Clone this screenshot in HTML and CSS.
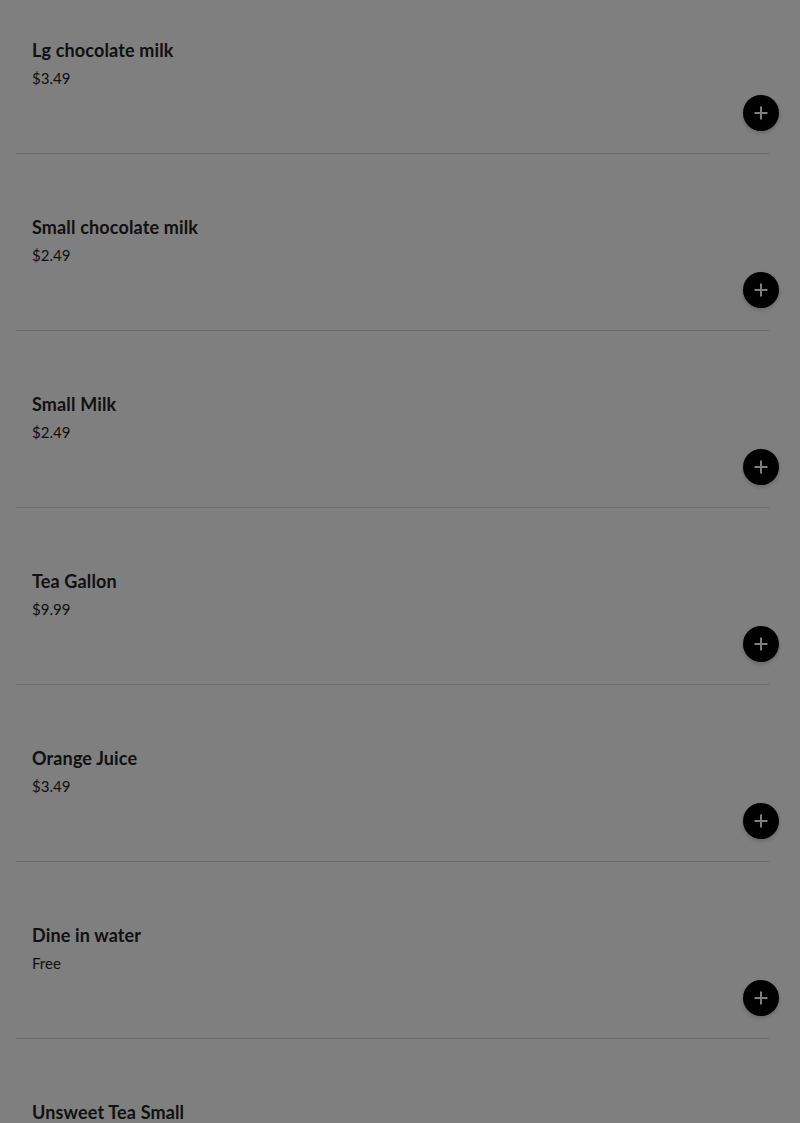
FILE: index.html
```html
<!DOCTYPE html>
<html lang="en">
<head>
    <meta charset="UTF-8">
    <meta name="viewport" content="width=device-width, initial-scale=1.0">
    <title>Menu - Drinks</title>
    <link rel="stylesheet" href="styles.css">
</head>
<body>

    <ul class="menu-list">
        <li class="menu-item">
            <div class="item-name">Lg chocolate milk</div>
            <div class="item-price">$3.49</div>
            <div class="item-actions"><button class="add-btn" aria-label="Add"><svg viewBox="0 0 16 16"><path d="M8 1.5v13M1.5 8h13"/></svg></button></div>
        </li>
        <li class="menu-item">
            <div class="item-name">Small chocolate milk</div>
            <div class="item-price">$2.49</div>
            <div class="item-actions"><button class="add-btn" aria-label="Add"><svg viewBox="0 0 16 16"><path d="M8 1.5v13M1.5 8h13"/></svg></button></div>
        </li>
        <li class="menu-item">
            <div class="item-name">Small Milk</div>
            <div class="item-price">$2.49</div>
            <div class="item-actions"><button class="add-btn" aria-label="Add"><svg viewBox="0 0 16 16"><path d="M8 1.5v13M1.5 8h13"/></svg></button></div>
        </li>
        <li class="menu-item">
            <div class="item-name">Tea Gallon</div>
            <div class="item-price">$9.99</div>
            <div class="item-actions"><button class="add-btn" aria-label="Add"><svg viewBox="0 0 16 16"><path d="M8 1.5v13M1.5 8h13"/></svg></button></div>
        </li>
        <li class="menu-item">
            <div class="item-name">Orange Juice</div>
            <div class="item-price">$3.49</div>
            <div class="item-actions"><button class="add-btn" aria-label="Add"><svg viewBox="0 0 16 16"><path d="M8 1.5v13M1.5 8h13"/></svg></button></div>
        </li>
        <li class="menu-item">
            <div class="item-name">Dine in water</div>
            <div class="item-price">Free</div>
            <div class="item-actions"><button class="add-btn" aria-label="Add"><svg viewBox="0 0 16 16"><path d="M8 1.5v13M1.5 8h13"/></svg></button></div>
        </li>
        <li class="menu-item">
            <div class="item-name">Unsweet Tea Small</div>
            <div class="item-price">$2.49</div>
            <div class="item-actions"><button class="add-btn" aria-label="Add"><svg viewBox="0 0 16 16"><path d="M8 1.5v13M1.5 8h13"/></svg></button></div>
        </li>
    </ul>

    <div class="backdrop"></div>

</body>
</html>
```

FILE: styles.css
```css
body {
    font-family: "Lato", "Noto Sans", sans-serif;
    background: #fff;
    color: #333;
    margin: 0;
    overflow: hidden;
}

.menu-list {
    list-style: none;
    margin: -23px 31px 0 16px;
    padding: 0;
}

.menu-item {
    padding: 61px 16px 22px;
    border-bottom: 1px solid #d6d6d6;
}

.item-name {
    font-size: 18px;
    font-weight: 700;
    line-height: 24px;
    letter-spacing: 0.15px;
    color: #222;
}

.item-price {
    margin-top: 5px;
    font-size: 15px;
    line-height: 23px;
    color: #222;
}

.item-actions {
    display: flex;
    justify-content: flex-end;
    margin-top: 5px;
    margin-right: -26px;
}

.add-btn {
    width: 36px;
    height: 36px;
    border-radius: 50%;
    border: none;
    padding: 0;
    background: #000;
    display: flex;
    align-items: center;
    justify-content: center;
    box-shadow: 0 2px 4px rgba(0, 0, 0, 0.2);
    cursor: pointer;
}

.add-btn svg {
    width: 16px;
    height: 16px;
    stroke: #fff;
    stroke-width: 2;
    fill: none;
}

.backdrop {
    position: fixed;
    inset: 0;
    background: rgba(0, 0, 0, 0.5);
}
```
